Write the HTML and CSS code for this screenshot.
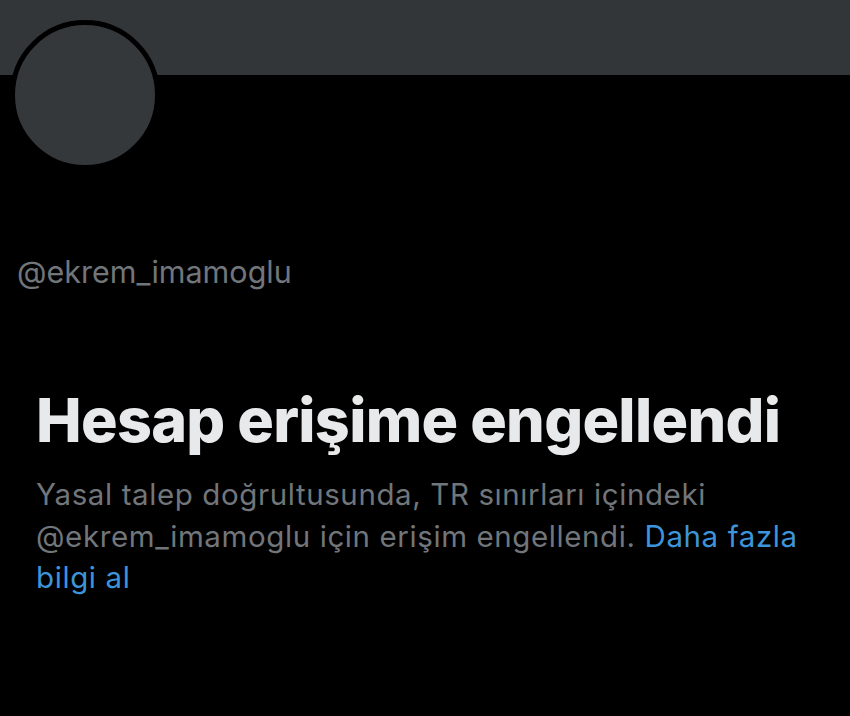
FILE: index.html
```html
<!DOCTYPE html>
<html lang="tr">
<head>
<meta charset="utf-8">
<link rel="stylesheet" href="styles.css">
</head>
<body>
<div class="page">
  <div class="banner"></div>
  <div class="profile">
    <div class="avatar"></div>
    <div class="handle">@ekrem_imamoglu</div>
  </div>
  <div class="notice">
    <h1 class="title">Hesap erişime engellendi</h1>
    <p class="desc">Yasal talep doğrultusunda, TR sınırları içindeki @ekrem_imamoglu için erişim engellendi. <a class="link" href="#">Daha fazla bilgi al</a></p>
  </div>
</div>
</body>
</html>
```
FILE: styles.css
```css
html, body {
  margin: 0;
  padding: 0;
  background: #000;
}
.page {
  width: 850px;
  height: 716px;
  background: #000;
  overflow: hidden;
  font-family: Inter, "Noto Sans", sans-serif;
}
.banner {
  height: 75px;
  background: #333639;
}
.profile {
  padding-left: 10px;
  margin-top: -55px;
}
.avatar {
  width: 140px;
  height: 140px;
  border-radius: 50%;
  background: #35383b;
  border: 5px solid #000;
}
.handle {
  margin-top: 84px;
  padding-left: 7px;
  font-size: 30.5px;
  line-height: 36px;
  color: #71767b;
}
.notice {
  padding: 0 36px;
  margin-top: 94px;
}
.title {
  margin: 0;
  font-size: 61px;
  line-height: 72px;
  font-weight: 800;
  letter-spacing: -0.7px;
  color: #e7e9ea;
  white-space: nowrap;
}
.desc {
  margin: 18px 0 0;
  font-size: 29.5px;
  line-height: 41.5px;
  letter-spacing: 0.6px;
  color: #71767b;
}
.link {
  color: #3d94da;
  text-decoration: none;
}
```
